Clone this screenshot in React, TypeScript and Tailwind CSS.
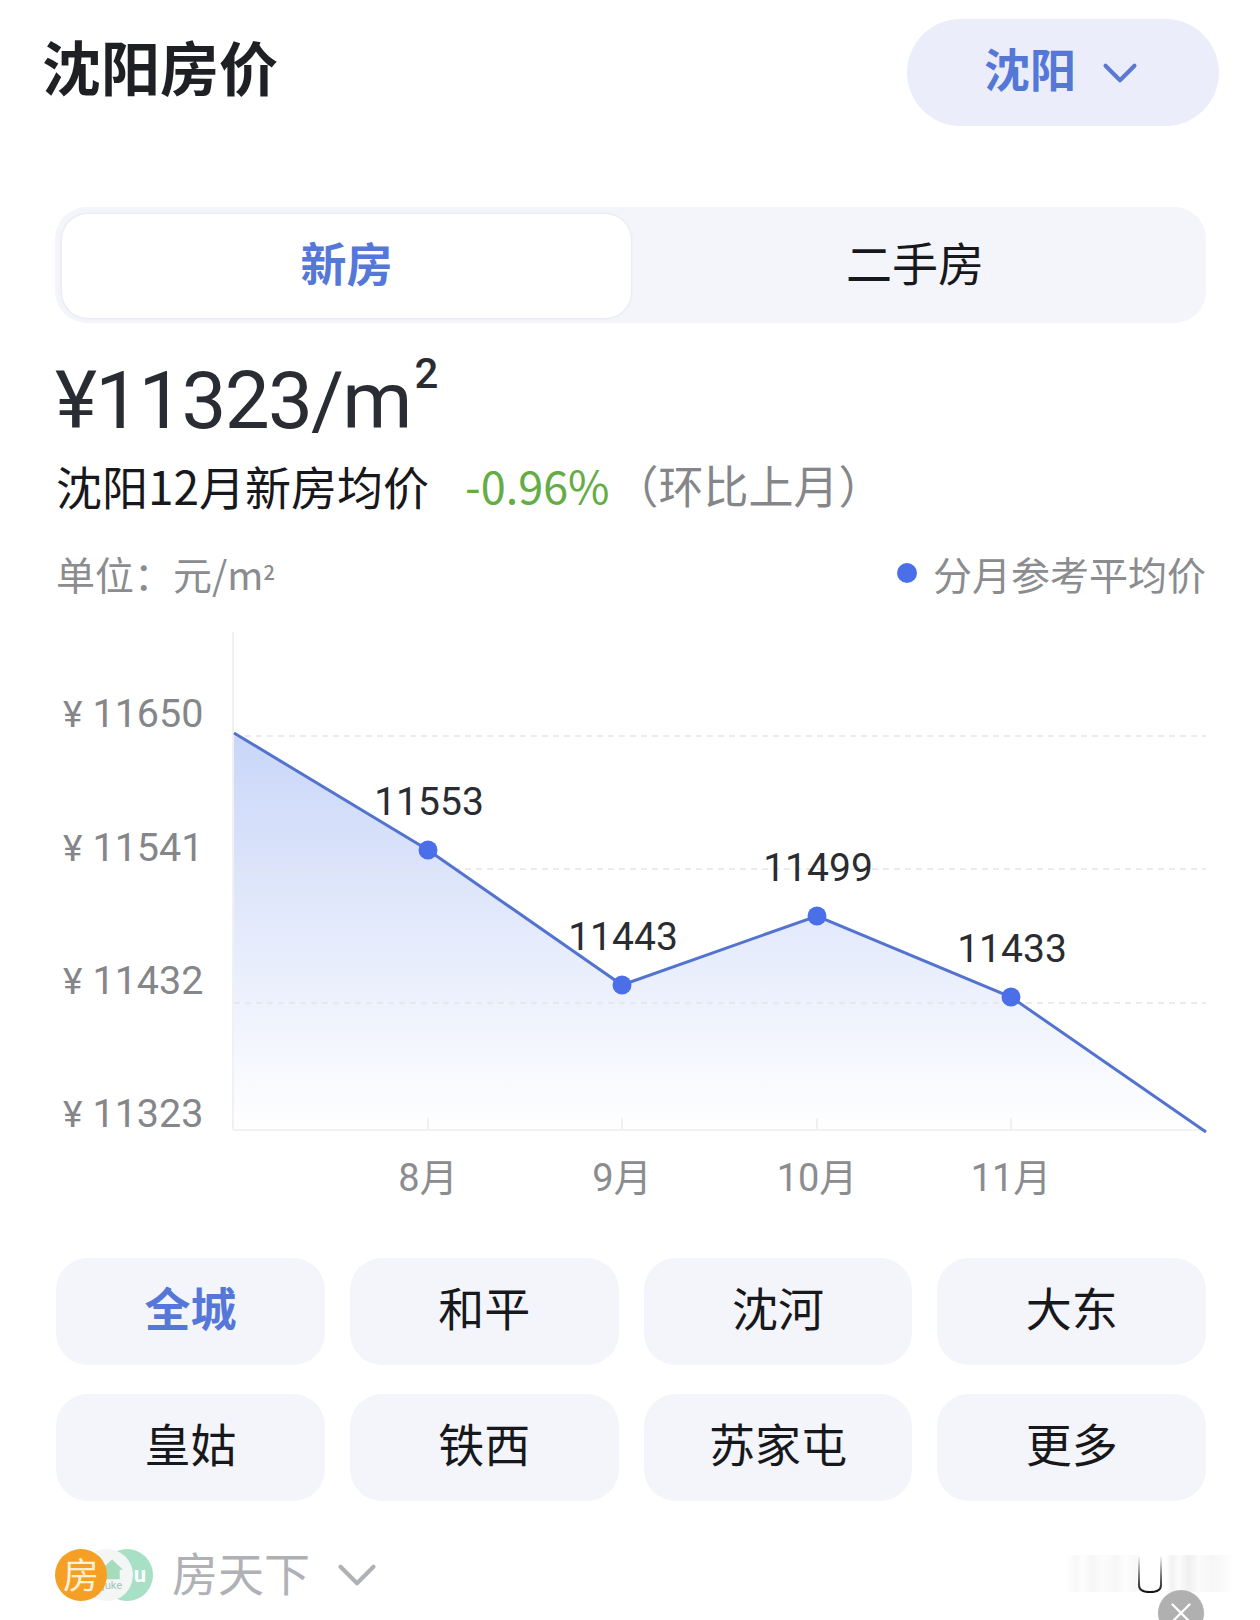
import { ChevronDown, X } from 'lucide-react';

const CJK = "font-['Noto_Sans_CJK_SC','Noto_Sans',sans-serif]";

const districts = ['全城', '和平', '沈河', '大东', '皇姑', '铁西', '苏家屯', '更多'];

// chart coords are page coords minus (0, 632)
const yTicks = [
    { label: '11650', y: 95 },
    { label: '11541', y: 229 },
    { label: '11432', y: 362 },
    { label: '11323', y: 495 },
];

const points = [
    { x: 428, y: 218, value: '11553', month: '8月' },
    { x: 622, y: 353, value: '11443', month: '9月' },
    { x: 817, y: 284, value: '11499', month: '10月' },
    { x: 1011, y: 365, value: '11433', month: '11月' },
];

function PriceChart() {
    const line =
        'M234 101 ' + points.map((p) => `L${p.x} ${p.y}`).join(' ') + ' L1206 500';

    return (
        <svg width={1260} height={580} viewBox="0 0 1260 580" className="mt-[34px] block">
            <defs>
                <linearGradient id="area" x1="0" y1="0" x2="0" y2="1">
                    <stop offset="0" stopColor="#c9d6f8" />
                    <stop offset="1" stopColor="#ffffff" />
                </linearGradient>
            </defs>
            <path d={`${line} L234 498 Z`} fill="url(#area)" />
            <line x1={233} y1={0} x2={233} y2={498} stroke="#f0f1f3" strokeWidth={2} />
            <line x1={233} y1={498} x2={1206} y2={498} stroke="#f0f1f3" strokeWidth={2} />
            {[104, 237, 371].map((y) => (
                <line
                    key={y}
                    x1={234}
                    y1={y}
                    x2={1206}
                    y2={y}
                    stroke="#e4e5e8"
                    strokeWidth={1.5}
                    strokeDasharray="6 5"
                />
            ))}
            {points.map((p) => (
                <line key={p.month} x1={p.x} y1={486} x2={p.x} y2={498} stroke="#f0f1f3" strokeWidth={2} />
            ))}
            <path d={line} fill="none" stroke="#5373cf" strokeWidth={3} />
            {yTicks.map((t) => (
                <text key={t.label} x={63} y={t.y} fontSize={39.5} fill="#85868a" fontFamily="Roboto, sans-serif">
                    <tspan fontSize={37}>¥</tspan>
                    <tspan dx={10}>{t.label}</tspan>
                </text>
            ))}
            {points.map((p) => (
                <g key={p.value}>
                    <circle cx={p.x} cy={p.y} r={9.5} fill="#4a6fe8" />
                    <text
                        x={p.x + 1}
                        y={p.y - 35}
                        textAnchor="middle"
                        fontSize={39}
                        fill="#2a2c31"
                        fontFamily="Roboto, sans-serif"
                    >
                        {p.value}
                    </text>
                    <text
                        x={p.x}
                        y={559}
                        textAnchor="middle"
                        fontSize={38}
                        fill="#8b8c90"
                        fontFamily="Roboto, 'Noto Sans CJK SC', sans-serif"
                    >
                        {p.month}
                    </text>
                </g>
            ))}
        </svg>
    );
}

function SourceLogos() {
    return (
        <div className="relative h-[52px] w-[100px] shrink-0">
            <div className="absolute left-[46px] top-0 flex h-[52px] w-[52px] items-center justify-end rounded-full bg-[#a8e0c6] pr-[7px] font-['Roboto',sans-serif] text-[22px] font-bold leading-none text-white">
                u
            </div>
            <div className="absolute left-[26px] top-0 flex h-[52px] w-[52px] flex-col items-center justify-center rounded-full bg-[#f3f6f4]">
                <svg width={24} height={22} viewBox="0 0 28 24" className="ml-[10px]">
                    <path d="M14 1 L27 13 H23 V24 H5 V13 H1 Z" fill="#a6dcbc" />
                </svg>
                <span className="ml-[10px] font-['Roboto',sans-serif] text-[11px] leading-[12px] text-[#a5c4b4]">juke</span>
            </div>
            <div className="absolute left-0 top-0 flex h-[52px] w-[52px] items-center justify-center rounded-full bg-[#f59f24] pb-[4px] text-[36px] leading-none text-[#fdf0d8]">
                房
            </div>
        </div>
    );
}

export default function App() {
    return (
        <div className={`relative h-[1620px] w-[1260px] overflow-hidden bg-white ${CJK}`}>
            <div className="flex items-start justify-between pl-[42px] pr-[41px] pt-[19px]">
                <h1 className="mt-[7px] text-[59px] font-semibold leading-[80px] text-[#1f2024]">沈阳房价</h1>
                <div className="flex h-[107px] w-[312px] items-center rounded-full bg-[#ebeefa] pl-[77px] text-[46px] font-semibold text-[#5577d8]">
                    <span className="pb-[10px]">沈阳</span>
                    <ChevronDown size={58} strokeWidth={1.7} className="ml-[15px] text-[#5c78d0]" />
                </div>
            </div>

            <div className="ml-[55px] mt-[81px] flex h-[116px] w-[1151px] rounded-[32px] bg-[#f4f5fa] p-[7px]">
                <div className="flex h-[104px] w-[569px] items-center justify-center rounded-[26px] bg-white pb-[10px] text-[46px] font-semibold text-[#5577d8] shadow-[0_0_3px_rgba(80,90,130,0.15)]">
                    新房
                </div>
                <div className="flex h-[104px] flex-1 items-center justify-center pb-[10px] text-[46px] text-[#17181c]">
                    二手房
                </div>
            </div>

            <div className="ml-[55px] mt-[34px] flex h-[88px] items-start font-['Roboto',sans-serif] text-[80px] leading-[88px] tracking-[-1.8px] text-[#2a2c33]">
                <span>¥11323/m</span>
                <span className="ml-[4px] mt-[-7px] text-[42px] font-medium leading-[48px]">2</span>
            </div>

            <div className="ml-[56px] mt-[9px] flex h-[62px] items-center text-[46px] leading-[62px] text-[#17181c]">
                <span>沈阳12月新房均价</span>
                <span className="ml-[36px] text-[45px] text-[#64ad45]">-0.96%</span>
                <span className="ml-[4px] text-[45px] text-[#85868a]">（环比上月）</span>
            </div>

            <div className="ml-[56px] mt-[32px] flex h-[50px] w-[1150px] items-center justify-between text-[39px] text-[#8b8c90]">
                <span>
                    单位：元/m<sup className="text-[20px] font-medium">2</sup>
                </span>
                <span className="flex items-center gap-[16px]">
                    <span className="h-[20px] w-[20px] rounded-full bg-[#4a6fe8]" />
                    分月参考平均价
                </span>
            </div>

            <PriceChart />

            <div className="ml-[56px] mt-[46px] grid w-[1150px] grid-cols-4 gap-x-[25px] gap-y-[29px]">
                {districts.map((name, i) => (
                    <div
                        key={name}
                        className={`flex h-[107px] items-center justify-center rounded-[32px] bg-[#f4f5fa] pb-[10px] text-[46px] ${
                            i === 0 ? 'font-semibold text-[#5577d8]' : 'text-[#17181c]'
                        }`}
                    >
                        {name}
                    </div>
                ))}
            </div>

            <div className="ml-[55px] mt-[48px] flex h-[52px] items-center text-[46px] text-[#b0b1b6]">
                <SourceLogos />
                <span className="ml-[17px] pb-[8px]">房天下</span>
                <ChevronDown size={66} strokeWidth={1.5} className="ml-[14px] text-[#b0b1b6]" />
            </div>

            {/* smeared watermark over the corner */}
            <div className="absolute left-[1066px] top-[1555px] h-[37px] w-[166px] bg-[linear-gradient(90deg,#ffffff,#f8f8f8_6%,#fdfdfd_10%,#f6f6f6_16%,#fcfcfc_22%,#f7f7f7_30%,#fdfdfd_36%,#f8f8f8_42%,#ffffff_46%,#ffffff_60%,#f2f2f2_64%,#fcfcfc_68%,#efefef_74%,#fbfbfb_80%,#f6f6f6_88%,#fbfbfb_96%,#ffffff)]" />
            <svg width={28} height={40} viewBox="0 0 28 40" className="absolute left-[1136px] top-[1555px]">
                <defs>
                    <linearGradient id="smear" x1="0" y1="0" x2="0" y2="1">
                        <stop offset="0" stopColor="#ffffff" />
                        <stop offset="1" stopColor="#111111" />
                    </linearGradient>
                </defs>
                <path d="M3 0 V30 Q3 37 14 37 Q25 37 25 30 V0" fill="#ffffff" stroke="url(#smear)" strokeWidth={2} />
            </svg>
            <div className="absolute left-[1158px] top-[1590px] flex h-[46px] w-[46px] items-center justify-center rounded-full bg-[#b0b0b0] text-white">
                <X size={34} strokeWidth={1.6} />
            </div>
        </div>
    );
}
